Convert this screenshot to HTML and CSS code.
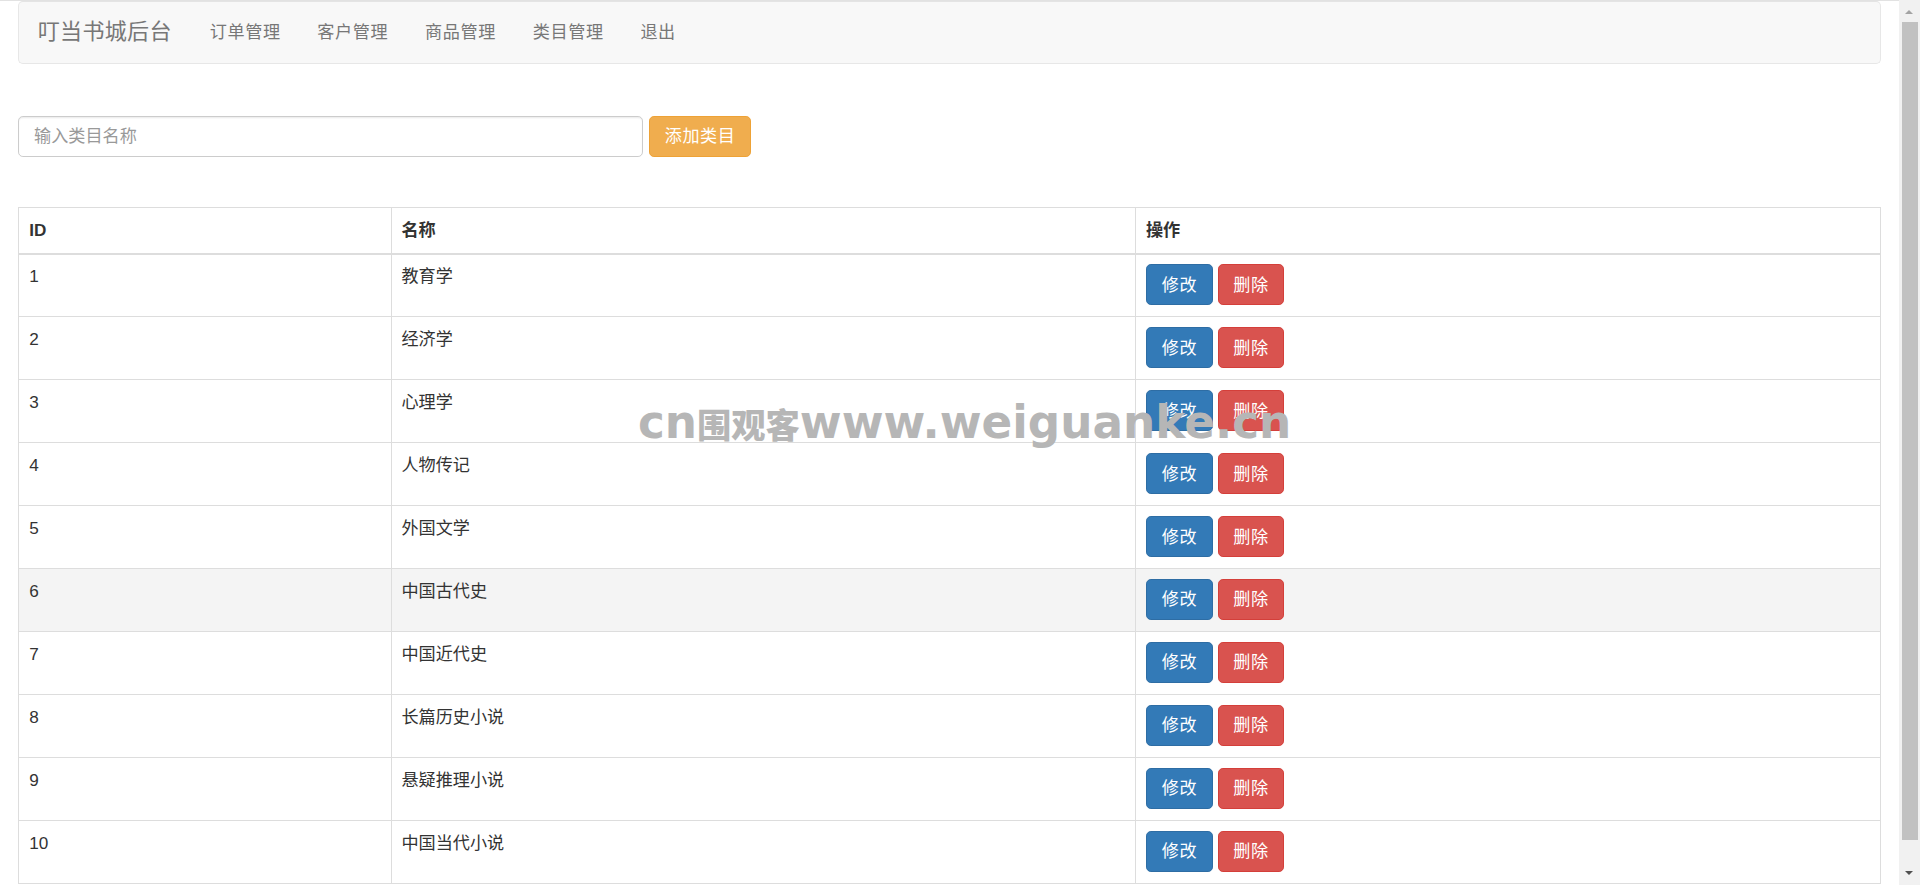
FILE: index.html
```html
<!DOCTYPE html>
<html lang="zh-CN">
<head>
<meta charset="utf-8">
<title>叮当书城后台 - 类目管理</title>
<link rel="stylesheet" href="styles.css">
</head>
<body>
<div class="container-fluid">
  <nav class="navbar">
    <a class="navbar-brand" href="#">叮当书城后台</a>
    <ul class="navbar-nav">
      <li><a href="#">订单管理</a></li>
      <li><a href="#">客户管理</a></li>
      <li><a href="#">商品管理</a></li>
      <li><a href="#">类目管理</a></li>
      <li><a href="#">退出</a></li>
    </ul>
  </nav>

  <form class="add-form">
    <input class="form-control" type="text" placeholder="输入类目名称">
    <button class="btn btn-warning" type="button">添加类目</button>
  </form>

  <table class="table">
    <colgroup>
      <col class="col-id">
      <col class="col-name">
      <col class="col-op">
    </colgroup>
    <thead>
      <tr><th>ID</th><th>名称</th><th>操作</th></tr>
    </thead>
    <tbody>
      <tr><td>1</td><td>教育学</td><td><button class="btn btn-primary">修改</button> <button class="btn btn-danger">删除</button></td></tr>
      <tr><td>2</td><td>经济学</td><td><button class="btn btn-primary">修改</button> <button class="btn btn-danger">删除</button></td></tr>
      <tr><td>3</td><td>心理学</td><td><button class="btn btn-primary">修改</button> <button class="btn btn-danger">删除</button></td></tr>
      <tr><td>4</td><td>人物传记</td><td><button class="btn btn-primary">修改</button> <button class="btn btn-danger">删除</button></td></tr>
      <tr><td>5</td><td>外国文学</td><td><button class="btn btn-primary">修改</button> <button class="btn btn-danger">删除</button></td></tr>
      <tr class="hover"><td>6</td><td>中国古代史</td><td><button class="btn btn-primary">修改</button> <button class="btn btn-danger">删除</button></td></tr>
      <tr><td>7</td><td>中国近代史</td><td><button class="btn btn-primary">修改</button> <button class="btn btn-danger">删除</button></td></tr>
      <tr><td>8</td><td>长篇历史小说</td><td><button class="btn btn-primary">修改</button> <button class="btn btn-danger">删除</button></td></tr>
      <tr><td>9</td><td>悬疑推理小说</td><td><button class="btn btn-primary">修改</button> <button class="btn btn-danger">删除</button></td></tr>
      <tr><td>10</td><td>中国当代小说</td><td><button class="btn btn-primary">修改</button> <button class="btn btn-danger">删除</button></td></tr>
    </tbody>
  </table>
</div>

<div class="watermark">cn<span class="wm-cjk">围观客</span>www.weiguanke.cn</div>

<div class="scrollbar">
  <span class="sb-arrow sb-up"></span>
  <span class="sb-thumb"></span>
  <span class="sb-arrow sb-down"></span>
</div>
</body>
</html>
```

FILE: styles.css
```css
html {
  zoom: 1.2245;
  overflow: hidden;
}

body {
  margin: 0;
  border-top: 1px solid #e2e2e2;
  font-family: "Liberation Sans", Arial, "Noto Sans CJK SC", sans-serif;
  font-size: 14px;
  line-height: 1.42857;
  color: #333;
  background: #fff;
  width: 1551px;
  position: relative;
  min-height: 760px;
}

.container-fluid {
  padding: 0 15px;
}

/* navbar */
.navbar {
  display: flex;
  align-items: center;
  min-height: 50px;
  background: #f8f8f8;
  border: 1px solid #e7e7e7;
  border-top-color: #e4e4e4;
  border-radius: 4px;
  padding: 0 15px;
}

.navbar-brand {
  margin-left: -15px;
  padding: 15px;
  font-size: 18px;
  line-height: 20px;
  height: 50px;
  box-sizing: border-box;
  color: #777;
  text-decoration: none;
  letter-spacing: 0.25px;
}

.navbar-nav {
  display: flex;
  list-style: none;
  margin: 0 0 0 1px;
  padding: 0;
}

.navbar-nav a {
  display: block;
  padding: 15px;
  line-height: 20px;
  color: #777;
  text-decoration: none;
  letter-spacing: 0.5px;
}

/* form */
.add-form {
  display: flex;
  align-items: center;
  gap: 5px;
  margin: 42px 0 41px;
}

.form-control {
  width: 510px;
  height: 34px;
  box-sizing: border-box;
  padding: 6px 12px;
  font: inherit;
  color: #555;
  background: #fff;
  border: 1px solid #ccc;
  border-radius: 4px;
  box-shadow: inset 0 1px 1px rgba(0, 0, 0, .075);
  outline: none;
}

.form-control::placeholder {
  color: #999;
}

/* buttons */
.btn {
  display: inline-block;
  padding: 6px 12px;
  font-family: inherit;
  font-size: 14px;
  line-height: 1.42857;
  letter-spacing: 0.5px;
  border: 1px solid transparent;
  border-radius: 4px;
  color: #fff;
  cursor: pointer;
  vertical-align: middle;
}

.btn-warning {
  background: #f0ad4e;
  border-color: #eea236;
}

.btn-primary {
  background: #337ab7;
  border-color: #2e6da4;
}

.btn-danger {
  background: #d9534f;
  border-color: #d43f3a;
}

/* table */
.table {
  width: 100%;
  border-collapse: collapse;
  border-spacing: 0;
  border: 1px solid #ddd;
  margin-bottom: 20px;
}

.col-id { width: 20%; }
.col-name { width: 40%; }
.col-op { width: 40%; }

.table th,
.table td {
  padding: 8px;
  line-height: 1.42857;
  text-align: left;
  border: 1px solid #ddd;
}

.table th {
  vertical-align: bottom;
  border-bottom-width: 2px;
  font-weight: bold;
}

.table td {
  vertical-align: top;
  padding-bottom: 9px;
}

.table tr.hover td {
  background: #f4f4f4;
}

/* watermark overlay */
.watermark {
  position: absolute;
  left: 521px;
  top: 326px;
  font-family: "DejaVu Sans", sans-serif;
  font-weight: bold;
  font-size: 37px;
  line-height: 1;
  letter-spacing: 0;
  color: #b6b6b6;
  white-space: nowrap;
  pointer-events: none;
}

.wm-cjk {
  font-family: "Noto Sans CJK SC", sans-serif;
  font-weight: 900;
  font-size: 28px;
  letter-spacing: 0;
}

/* fake scrollbar */
.scrollbar {
  position: fixed;
  top: 0;
  right: 0;
  width: 17px;
  height: 100%;
  background: #f1f1f1;
}

.sb-thumb {
  position: absolute;
  top: 18px;
  left: 2px;
  width: 13px;
  height: 668px;
  background: #c1c1c1;
}

.sb-arrow {
  position: absolute;
  left: 5px;
  width: 0;
  height: 0;
  border-left: 3.5px solid transparent;
  border-right: 3.5px solid transparent;
}

.sb-up {
  top: 8px;
  border-bottom: 4px solid #a3a3a3;
}

.sb-down {
  bottom: 8px;
  border-top: 4px solid #505050;
}
```
